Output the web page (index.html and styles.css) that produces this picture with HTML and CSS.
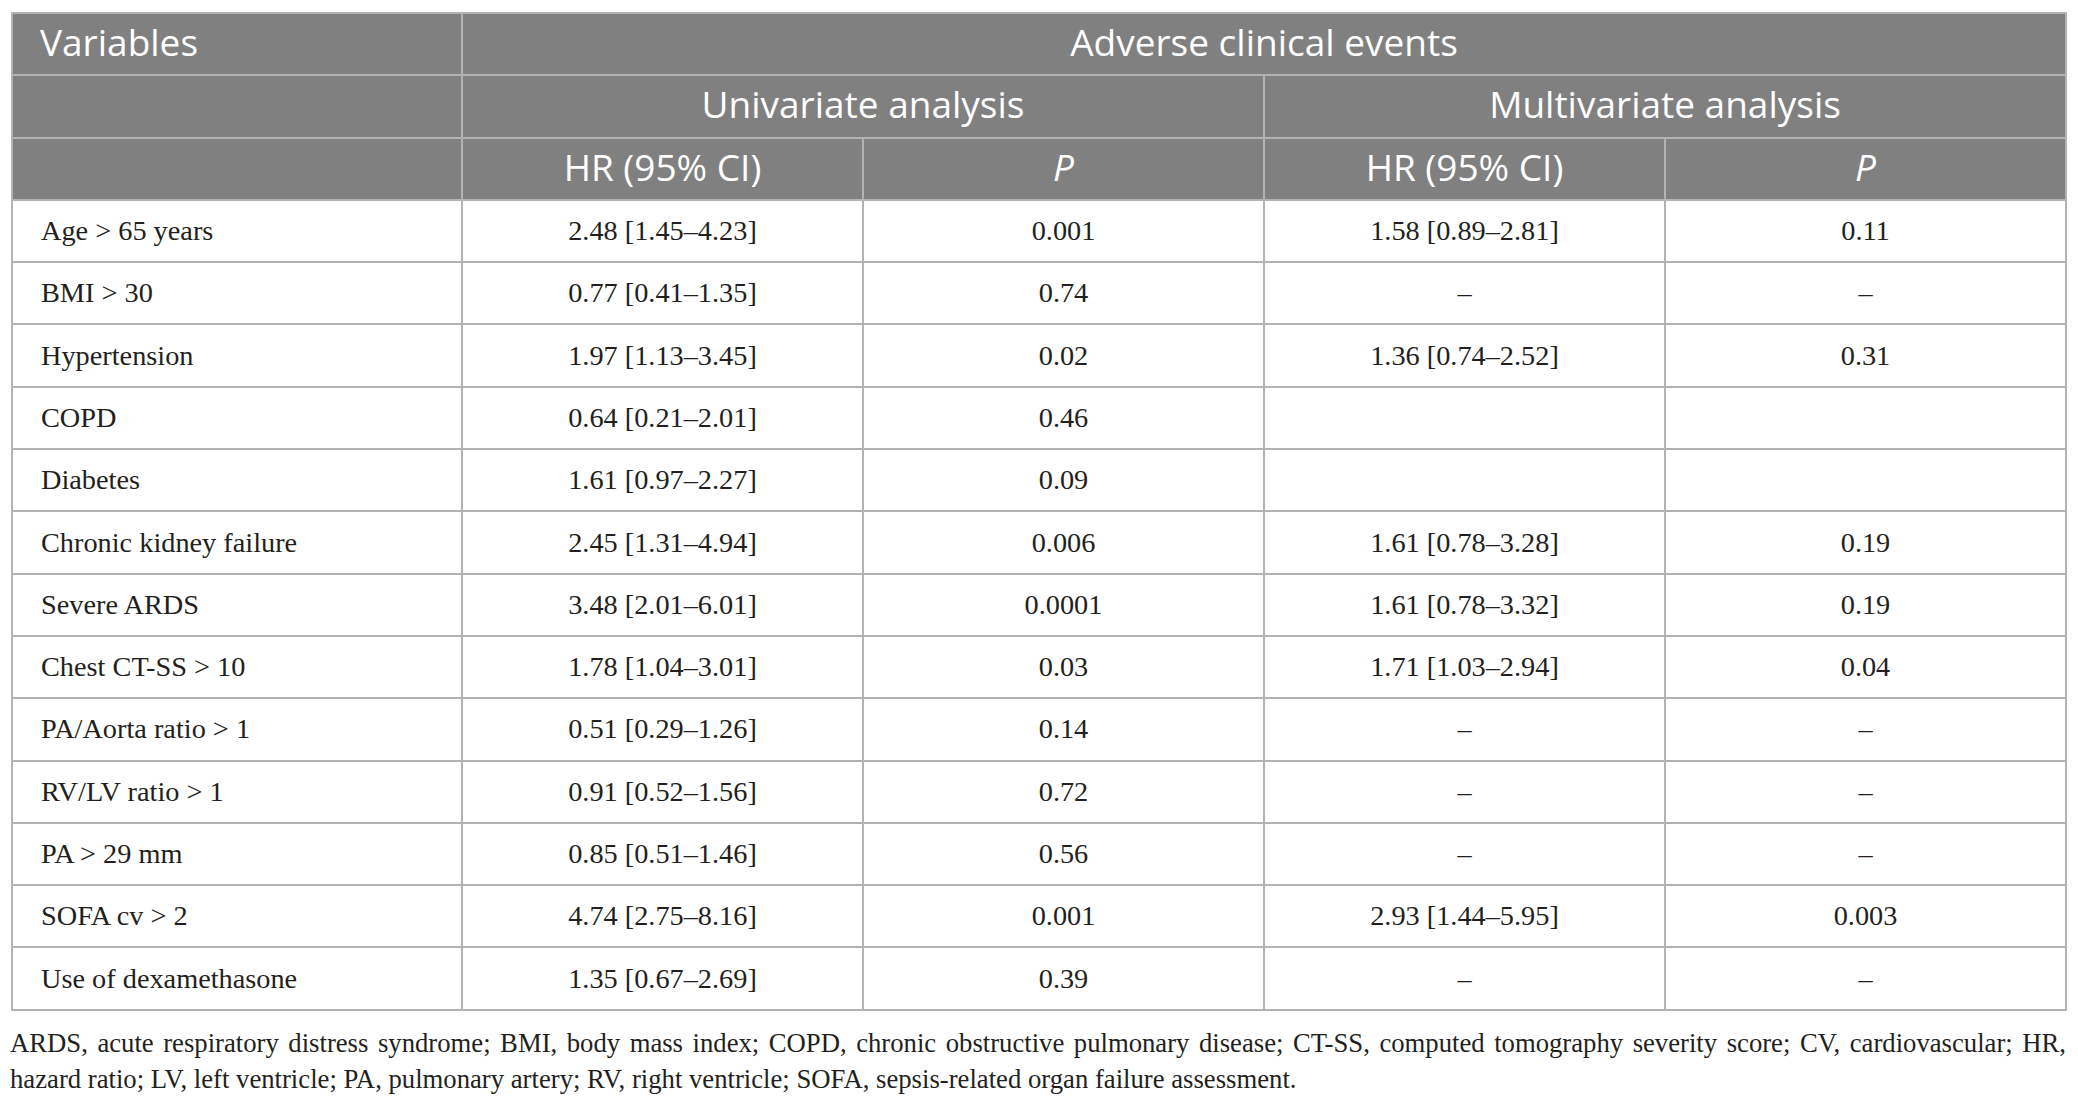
FILE: index.html
```html
<!DOCTYPE html>
<html>
<head>
<meta charset="utf-8">
<link rel="stylesheet" href="styles.css">
</head>
<body>
<div class="wrap">
<table class="data">
  <colgroup>
    <col class="c-var"><col class="c-num"><col class="c-num"><col class="c-num"><col class="c-num">
  </colgroup>
  <thead>
    <tr>
      <th class="left">Variables</th>
      <th colspan="4">Adverse clinical events</th>
    </tr>
    <tr>
      <th></th>
      <th colspan="2">Univariate analysis</th>
      <th colspan="2">Multivariate analysis</th>
    </tr>
    <tr>
      <th></th>
      <th>HR (95% CI)</th>
      <th><i>P</i></th>
      <th>HR (95% CI)</th>
      <th><i>P</i></th>
    </tr>
  </thead>
  <tbody>
    <tr><td class="left">Age &gt; 65 years</td><td>2.48 [1.45–4.23]</td><td>0.001</td><td>1.58 [0.89–2.81]</td><td>0.11</td></tr>
    <tr><td class="left">BMI &gt; 30</td><td>0.77 [0.41–1.35]</td><td>0.74</td><td>–</td><td>–</td></tr>
    <tr><td class="left">Hypertension</td><td>1.97 [1.13–3.45]</td><td>0.02</td><td>1.36 [0.74–2.52]</td><td>0.31</td></tr>
    <tr><td class="left">COPD</td><td>0.64 [0.21–2.01]</td><td>0.46</td><td></td><td></td></tr>
    <tr><td class="left">Diabetes</td><td>1.61 [0.97–2.27]</td><td>0.09</td><td></td><td></td></tr>
    <tr><td class="left">Chronic kidney failure</td><td>2.45 [1.31–4.94]</td><td>0.006</td><td>1.61 [0.78–3.28]</td><td>0.19</td></tr>
    <tr><td class="left">Severe ARDS</td><td>3.48 [2.01–6.01]</td><td>0.0001</td><td>1.61 [0.78–3.32]</td><td>0.19</td></tr>
    <tr><td class="left">Chest CT-SS &gt; 10</td><td>1.78 [1.04–3.01]</td><td>0.03</td><td>1.71 [1.03–2.94]</td><td>0.04</td></tr>
    <tr><td class="left">PA/Aorta ratio &gt; 1</td><td>0.51 [0.29–1.26]</td><td>0.14</td><td>–</td><td>–</td></tr>
    <tr><td class="left">RV/LV ratio &gt; 1</td><td>0.91 [0.52–1.56]</td><td>0.72</td><td>–</td><td>–</td></tr>
    <tr><td class="left">PA &gt; 29 mm</td><td>0.85 [0.51–1.46]</td><td>0.56</td><td>–</td><td>–</td></tr>
    <tr><td class="left">SOFA cv &gt; 2</td><td>4.74 [2.75–8.16]</td><td>0.001</td><td>2.93 [1.44–5.95]</td><td>0.003</td></tr>
    <tr><td class="left">Use of dexamethasone</td><td>1.35 [0.67–2.69]</td><td>0.39</td><td>–</td><td>–</td></tr>
  </tbody>
</table>
<div class="note">
  <span class="note-line full">ARDS, acute respiratory distress syndrome; BMI, body mass index; COPD, chronic obstructive pulmonary disease; CT-SS, computed tomography severity score; CV, cardiovascular; HR,</span>
  <span class="note-line">hazard ratio; LV, left ventricle; PA, pulmonary artery; RV, right ventricle; SOFA, sepsis-related organ failure assessment.</span>
</div>
</div>
</body>
</html>
```
FILE: styles.css
```css
html, body {
  margin: 0;
  padding: 0;
  background: #ffffff;
}
.wrap {
  padding: 12px 12px 0 11px;
  width: 2055px;
}
.data {
  border-collapse: collapse;
  width: 2053px;
  table-layout: fixed;
  border: 2px solid #a9a9a9;
}
.c-var { width: 450px; }
.c-num { width: 401px; }
.data th {
  background: #808080;
  color: #ffffff;
  font-family: "Open Sans", "Noto Sans", sans-serif;
  font-weight: 400;
  font-size: 37px;
  line-height: 1;
  height: 62.3px;
  padding: 0 27px 5px 27px;
  text-align: center;
  border: 2px solid #b3b3b3;
  box-sizing: border-box;
  white-space: nowrap;
}
.data td {
  font-family: "Liberation Serif", "Times New Roman", serif;
  font-size: 28.3px;
  color: #231f20;
  height: 62.3px;
  padding: 0 28px;
  text-align: center;
  border: 2px solid #b3b3b3;
  box-sizing: border-box;
}
.data .left { text-align: left; }
.note {
  margin: 14px 0 0 -1px;
  font-family: "Liberation Serif", "Times New Roman", serif;
  font-size: 26.7px;
  line-height: 36px;
  color: #231f20;
  width: 2056px;
}
.note-line {
  display: block;
  white-space: nowrap;
}
.note-line.full {
  white-space: normal;
  text-align: justify;
  text-align-last: justify;
}
```
